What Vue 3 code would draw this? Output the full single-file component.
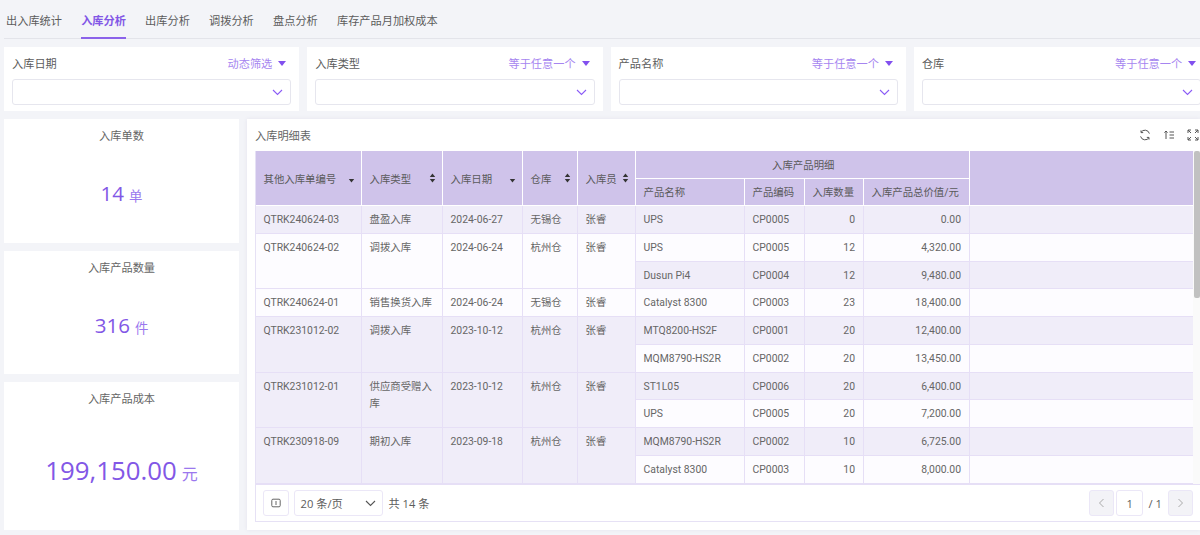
<template>
  <div class="page">
    <div class="tabs">
      <span v-for="(tab, i) in tabs" :key="tab" class="tab" :class="{ active: i === 1 }">{{ tab }}</span>
    </div>

    <div class="filters">
      <div v-for="f in filters" :key="f.label" class="filter">
        <div class="filter-head">
          <span>{{ f.label }}</span>
          <span class="filter-mode">{{ f.mode }}<i class="caret"></i></span>
        </div>
        <div class="filter-input">
          <svg width="11" height="7" viewBox="0 0 11 7"><path d="M1 1l4.5 4.5L10 1" fill="none" stroke="#8b5cf6" stroke-width="1.1"/></svg>
        </div>
      </div>
    </div>

    <div class="main">
      <div class="stats">
        <div v-for="s in stats" :key="s.title" class="stat" :class="s.cls">
          <div class="stat-title">{{ s.title }}</div>
          <div class="stat-value"><span class="num">{{ s.value }}</span><span class="unit">{{ s.unit }}</span></div>
        </div>
      </div>

      <div class="panel">
        <div class="panel-head">
          <span>入库明细表</span>
          <div class="panel-tools">
            <svg width="12" height="12" viewBox="0 0 12 12" fill="none" stroke="#555" stroke-width="1"><path d="M10.4 4.6A4.6 4.6 0 0 0 2 3.4M1.6 7.4A4.6 4.6 0 0 0 10 8.6"/><path d="M2 1.4v2.2h2.2M10 10.6V8.4H7.8"/></svg>
            <svg width="12" height="12" viewBox="0 0 12 12" fill="none" stroke="#555" stroke-width="1"><path d="M3 10V2M1.4 3.6L3 2l1.6 1.6M6.5 3H11M6.5 6H11M6.5 9H11"/></svg>
            <svg width="12" height="12" viewBox="0 0 12 12" fill="none" stroke="#555" stroke-width="1"><path d="M1 4V1h3M8 1h3v3M11 8v3H8M4 11H1V8M1 1l3 3M11 1L8 4M11 11L8 8M1 11l3-3"/></svg>
          </div>
        </div>

        <div class="table-box">
          <div class="table-wrap">
            <div class="table-scroll">
              <table>
                <colgroup>
                  <col v-for="(w, i) in colWidths" :key="i" :style="{ width: w + 'px' }">
                </colgroup>
                <thead>
                  <tr>
                    <th v-for="h in mainHeads" :key="h.text" rowspan="2">
                      <div class="th-inner">
                        <span>{{ h.text }}</span>
                        <svg width="7" height="10" viewBox="0 0 7 10" fill="#333">
                          <path v-if="!h.down" d="M3.5 0.5L6.2 4H0.8z"/>
                          <path d="M3.5 9.5L0.8 6h5.4z" />
                        </svg>
                      </div>
                    </th>
                    <th colspan="4" class="center">入库产品明细</th>
                    <th rowspan="2"></th>
                  </tr>
                  <tr>
                    <th>产品名称</th>
                    <th>产品编码</th>
                    <th>入库数量</th>
                    <th>入库产品总价值/元</th>
                  </tr>
                </thead>
                <tbody>
                  <template v-for="order in orders" :key="order.no">
                    <tr v-for="(item, ii) in order.items" :key="ii" :style="{ height: (item.h || 28) + 'px' }">
                      <template v-if="ii === 0">
                        <td :rowspan="order.items.length" :class="{ band: order.band }">{{ order.no }}</td>
                        <td :rowspan="order.items.length" :class="{ band: order.band }">{{ order.type }}</td>
                        <td :rowspan="order.items.length" :class="{ band: order.band }">{{ order.date }}</td>
                        <td :rowspan="order.items.length" :class="{ band: order.band }">{{ order.store }}</td>
                        <td :rowspan="order.items.length" :class="{ band: order.band }">张睿</td>
                      </template>
                      <td :class="{ band: item.band }">{{ item.name }}</td>
                      <td :class="{ band: item.band }">{{ item.code }}</td>
                      <td class="right" :class="{ band: item.band }">{{ item.qty }}</td>
                      <td class="right" :class="{ band: item.band }">{{ item.total }}</td>
                      <td :class="{ band: item.band }"></td>
                    </tr>
                  </template>
                </tbody>
              </table>
            </div>
            <div class="scrollbar"><div class="thumb"></div></div>
          </div>

          <div class="pager">
            <div class="pager-left">
              <div class="btn">
                <svg width="10" height="10" viewBox="0 0 10 10" fill="none" stroke="#666" stroke-width="1"><rect x="0.8" y="1.2" width="8.4" height="7.6" rx="1.2"/><path d="M5 3v4"/></svg>
              </div>
              <div class="size-select">
                <span>20 条/页</span>
                <svg width="11" height="7" viewBox="0 0 11 7"><path d="M1 1l4.5 4.5L10 1" fill="none" stroke="#555" stroke-width="1.1"/></svg>
              </div>
              <span>共 14 条</span>
            </div>
            <div class="pager-right">
              <div class="btn disabled">
                <svg width="7" height="10" viewBox="0 0 7 10"><path d="M5.5 1L1.5 5l4 4" fill="none" stroke="#aaa" stroke-width="1"/></svg>
              </div>
              <div class="page-input">1</div>
              <span class="page-total">/ 1</span>
              <div class="btn disabled">
                <svg width="7" height="10" viewBox="0 0 7 10"><path d="M1.5 1l4 4-4 4" fill="none" stroke="#aaa" stroke-width="1"/></svg>
              </div>
            </div>
          </div>
        </div>
      </div>
    </div>
  </div>
</template>

<script setup>
const tabs = ['出入库统计', '入库分析', '出库分析', '调拨分析', '盘点分析', '库存产品月加权成本']

const filters = [
  { label: '入库日期', mode: '动态筛选' },
  { label: '入库类型', mode: '等于任意一个' },
  { label: '产品名称', mode: '等于任意一个' },
  { label: '仓库', mode: '等于任意一个' }
]

const stats = [
  { title: '入库单数', value: '14', unit: '单', cls: 's1' },
  { title: '入库产品数量', value: '316', unit: '件', cls: 's2' },
  { title: '入库产品成本', value: '199,150.00', unit: '元', cls: 's3' }
]

const colWidths = [106, 81, 80, 55, 58, 109, 60, 59, 106, 224]

const mainHeads = [
  { text: '其他入库单编号', down: true },
  { text: '入库类型' },
  { text: '入库日期', down: true },
  { text: '仓库' },
  { text: '入库员' }
]

const orders = [
  { no: 'QTRK240624-03', type: '盘盈入库', date: '2024-06-27', store: '无锡仓', band: true, items: [
    { name: 'UPS', code: 'CP0005', qty: 0, total: '0.00', band: true }
  ] },
  { no: 'QTRK240624-02', type: '调拨入库', date: '2024-06-24', store: '杭州仓', band: false, items: [
    { name: 'UPS', code: 'CP0005', qty: 12, total: '4,320.00', band: false },
    { name: 'Dusun Pi4', code: 'CP0004', qty: 12, total: '9,480.00', band: true, h: 27 }
  ] },
  { no: 'QTRK240624-01', type: '销售换货入库', date: '2024-06-24', store: '无锡仓', band: false, items: [
    { name: 'Catalyst 8300', code: 'CP0003', qty: 23, total: '18,400.00', band: false }
  ] },
  { no: 'QTRK231012-02', type: '调拨入库', date: '2023-10-12', store: '杭州仓', band: true, items: [
    { name: 'MTQ8200-HS2F', code: 'CP0001', qty: 20, total: '12,400.00', band: true },
    { name: 'MQM8790-HS2R', code: 'CP0002', qty: 20, total: '13,450.00', band: false }
  ] },
  { no: 'QTRK231012-01', type: '供应商受赠入库', date: '2023-10-12', store: '杭州仓', band: true, items: [
    { name: 'ST1L05', code: 'CP0006', qty: 20, total: '6,400.00', band: true, h: 27 },
    { name: 'UPS', code: 'CP0005', qty: 20, total: '7,200.00', band: false }
  ] },
  { no: 'QTRK230918-09', type: '期初入库', date: '2023-09-18', store: '杭州仓', band: true, items: [
    { name: 'MQM8790-HS2R', code: 'CP0002', qty: 10, total: '6,725.00', band: true },
    { name: 'Catalyst 8300', code: 'CP0003', qty: 10, total: '8,000.00', band: false }
  ] }
]
</script>

<style>
html, body {
  margin: 0;
  overflow: hidden;
}
</style>

<style scoped>
.page {
  width: 1200px;
  height: 535px;
  overflow: hidden;
  background: #f3f4f8;
  color: #5c5c5c;
  font-family: "Open Sans", "Noto Sans CJK SC", sans-serif;
  font-size: 11.2px;
  box-sizing: border-box;
}

.tabs {
  display: flex;
  gap: 19.2px;
  height: 38px;
  margin-left: 4px;
  padding-left: 2px;
  border-bottom: 1px solid #e3e4ea;
  box-sizing: content-box;
}
.tab {
  height: 38px;
  line-height: 41px;
  box-sizing: border-box;
}
.tab.active {
  color: #8257e6;
  font-weight: 700;
  border-bottom: 2px solid #8b62ea;
  height: 39px;
}

.filters {
  display: grid;
  grid-template-columns: repeat(4, 295.3px);
  gap: 8px;
  margin: 8px 0 0 4px;
  width: 1210px;
}
.filter {
  background: #fff;
  height: 64px;
  padding: 0 8px;
  box-sizing: border-box;
}
.filter-head {
  display: flex;
  justify-content: space-between;
  align-items: center;
  height: 32px;
}
.filter-mode {
  color: #a685f0;
  display: flex;
  align-items: center;
  padding-right: 5px;
}
.caret {
  width: 0;
  height: 0;
  margin-left: 6px;
  border-left: 4.5px solid transparent;
  border-right: 4.5px solid transparent;
  border-top: 5.5px solid #8250ee;
}
.filter-input {
  height: 26px;
  border: 1px solid #e6e6ee;
  border-radius: 3px;
  box-sizing: border-box;
  display: flex;
  justify-content: flex-end;
  align-items: center;
  padding-right: 7px;
  background: #fff;
}

.main {
  display: flex;
  gap: 8px;
  margin: 8px 0 0 4px;
}
.stats {
  width: 235px;
  display: flex;
  flex-direction: column;
  gap: 8px;
  flex-shrink: 0;
}
.stat {
  background: #fff;
  display: flex;
  flex-direction: column;
  align-items: center;
}
.stat.s1 { height: 124px; }
.stat.s2 { height: 123px; }
.stat.s3 { height: 148px; }
.stat-title {
  margin-top: 9px;
  line-height: 16px;
  color: #666;
}
.stat-value {
  flex: 1;
  display: flex;
  align-items: baseline;
  justify-content: center;
  color: #8257e6;
}
.num {
  font-size: 20.5px;
  line-height: 98px;
}
.unit {
  font-size: 13.4px;
  margin-left: 5px;
  color: #9b78ee;
}
.s3 .num { font-size: 25.8px; line-height: 126px; }
.s3 .unit { font-size: 16px; }

.panel {
  flex: 0 0 953px;
  height: 411px;
  background: #fff;
  padding: 0 0 8px 8px;
  box-sizing: border-box;
  box-shadow: 0 0 4px #e4e4ee;
}
.panel-head {
  height: 32px;
  display: flex;
  justify-content: space-between;
  align-items: center;
  color: #666;
}
.panel-tools {
  display: flex;
  gap: 12px;
  margin-right: 1px;
}

.table-box {
  width: 945px;
  height: 371px;
  display: flex;
  flex-direction: column;
  border-bottom: 1px solid #e6e1f5;
  border-left: 1px solid #e6e1f5;
  box-sizing: border-box;
}
.table-wrap {
  display: flex;
  height: 333px;
  flex-shrink: 0;
  overflow: hidden;
}
.table-scroll {
  width: 938px;
  overflow: hidden;
  margin-left: -1px;
}
.scrollbar {
  width: 7px;
  background: #fafafa;
  flex-shrink: 0;
}
.thumb {
  width: 6px;
  height: 147px;
  background: #c1c1c1;
  margin-left: 1px;
  border-radius: 2px;
}

table {
  border-collapse: collapse;
  table-layout: fixed;
  width: 938px;
  font-size: 10.4px;
  font-family: Roboto, "Noto Sans CJK SC", sans-serif;
}
th {
  background: #cfc3ea;
  font-weight: 400;
  text-align: left;
  padding: 0 6px 0 7.5px;
  height: 27px;
  border: 1px solid #fff;
  border-top: 0;
  color: #5a5a5a;
  box-sizing: border-box;
}
th.center {
  text-align: center;
}
.th-inner {
  display: flex;
  justify-content: space-between;
  align-items: center;
  padding-top: 1px;
}
td {
  background: #fdfcff;
  padding: 5px 8px 3px 7.5px;
  line-height: 17px;
  border: 1px solid #e6dff6;
  vertical-align: top;
  box-sizing: border-box;
  color: #666;
}
td.band {
  background: #f0edf9;
}
td.right {
  text-align: right;
}

.pager {
  flex: 1;
  display: flex;
  justify-content: space-between;
  align-items: center;
  padding: 0 7px;
  background: #fff;
  border-top: 1px solid #e6dff6;
}
.pager-left, .pager-right {
  display: flex;
  align-items: center;
}
.pager-left { gap: 5px; }
.pager-right { gap: 2px; }
.btn {
  width: 25.5px;
  height: 26px;
  border: 1px solid #ebe7f7;
  border-radius: 3px;
  display: flex;
  align-items: center;
  justify-content: center;
  box-sizing: border-box;
  background: #fff;
}
.btn.disabled {
  background: #f3f3f7;
}
.size-select {
  width: 89px;
  height: 26px;
  border: 1px solid #ebe7f7;
  border-radius: 3px;
  box-sizing: border-box;
  display: flex;
  justify-content: space-between;
  align-items: center;
  padding: 0 6px;
  margin-right: 1px;
}
.page-input {
  width: 27px;
  height: 26px;
  border: 1px solid #ebe7f7;
  border-radius: 3px;
  box-sizing: border-box;
  display: flex;
  align-items: center;
  justify-content: center;
}
.page-total {
  margin: 0 3.5px;
}
</style>
